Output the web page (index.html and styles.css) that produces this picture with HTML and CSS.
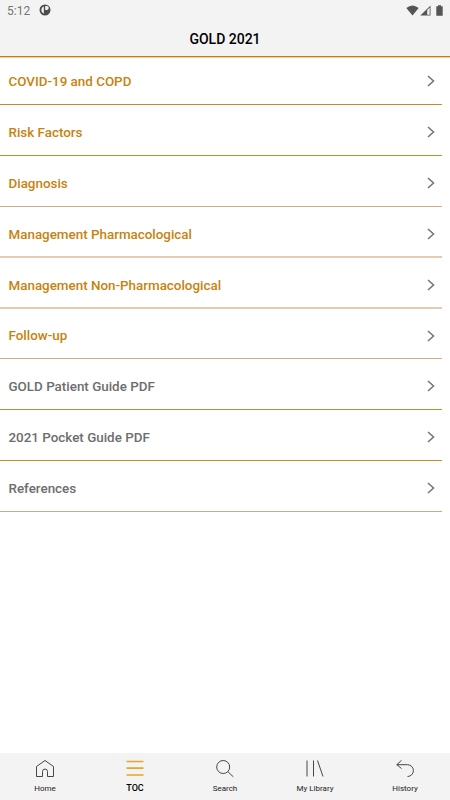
FILE: index.html
```html
<!DOCTYPE html>
<html lang="en">
<head>
  <meta charset="UTF-8" />
  <meta name="viewport" content="width=device-width, initial-scale=1.0" />
  <title>GOLD 2021</title>
  <link rel="stylesheet" href="styles.css">
</head>
<body>
  <!-- Header -->
  <header class="header">
    <div class="status-bar">
      <span class="clock">5:12</span>
      <svg class="status-app" width="12" height="12" viewBox="0 0 12 12">
        <circle cx="6" cy="6" r="5.5" fill="#4c4c4c" />
        <path d="M4.800 2.300A4 4 0 0 0 4.800 9.700z" fill="#f3f3f3" />
        <path d="M6.200 2H7.800a1.900 1.900 0 0 1 0 3.900H6.200z" fill="#f3f3f3" />
      </svg>
      <div class="status-icons">
        <svg width="13" height="11" viewBox="0 0 13 11">
          <path d="M0.300 3Q6.500-2.200 12.700 3L6.500 10.500z" fill="#555" />
        </svg>
        <svg width="11" height="11" viewBox="0 0 11 11">
          <path d="M0.300 10.500L10.500 0.500V10.500z" fill="#555" />
          <path d="M7.200 5V9.800H9.700V2.500z" fill="#eee" />
        </svg>
        <svg class="battery" width="7" height="11" viewBox="0 0 7 11">
          <path d="M0.300 1.300H2V0.300H5V1.300H6.700V10.700H0.300z" fill="#555" />
        </svg>
      </div>
    </div>
    <h1>GOLD 2021</h1>
  </header>

  <!-- Table of contents -->
  <main class="toc">
    <a class="toc-row"><span>COVID-19 and COPD</span><svg class="chevron" viewBox="0 0 8 12"><path d="M1 1l5.500 5L1 11" /></svg></a>
    <a class="toc-row"><span>Risk Factors</span><svg class="chevron" viewBox="0 0 8 12"><path d="M1 1l5.500 5L1 11" /></svg></a>
    <a class="toc-row soft"><span>Diagnosis</span><svg class="chevron" viewBox="0 0 8 12"><path d="M1 1l5.500 5L1 11" /></svg></a>
    <a class="toc-row pale"><span>Management Pharmacological</span><svg class="chevron" viewBox="0 0 8 12"><path d="M1 1l5.500 5L1 11" /></svg></a>
    <a class="toc-row pale"><span>Management Non-Pharmacological</span><svg class="chevron" viewBox="0 0 8 12"><path d="M1 1l5.500 5L1 11" /></svg></a>
    <a class="toc-row soft"><span>Follow-up</span><svg class="chevron" viewBox="0 0 8 12"><path d="M1 1l5.500 5L1 11" /></svg></a>
    <a class="toc-row extra"><span>GOLD Patient Guide PDF</span><svg class="chevron" viewBox="0 0 8 12"><path d="M1 1l5.500 5L1 11" /></svg></a>
    <a class="toc-row extra"><span>2021 Pocket Guide PDF</span><svg class="chevron" viewBox="0 0 8 12"><path d="M1 1l5.500 5L1 11" /></svg></a>
    <a class="toc-row extra soft"><span>References</span><svg class="chevron" viewBox="0 0 8 12"><path d="M1 1l5.500 5L1 11" /></svg></a>
  </main>

  <!-- Bottom tabs -->
  <nav class="tabs">
    <a class="tab">
      <svg viewBox="0 0 18 18"><path d="M0.500 6.500L9 0.500l8.500 6V16.500H11.500V11.500a2.500 2.500 0 0 0-5 0V16.500H0.500z" /></svg>
      <span>Home</span>
    </a>
    <a class="tab active">
      <svg viewBox="0 0 18 18"><path d="M0.500 1.500h17M0.500 8.200h17M0.500 15h17" /></svg>
      <span>TOC</span>
    </a>
    <a class="tab">
      <svg viewBox="0 0 18 18"><circle cx="7.200" cy="7" r="6.500" /><path d="M12 11.800l5.300 5" /></svg>
      <span>Search</span>
    </a>
    <a class="tab">
      <svg viewBox="0 0 18 18"><path d="M1 0.500v16M7.500 0.500v16M11.500 0.500l5.500 16" /></svg>
      <span>My Library</span>
    </a>
    <a class="tab">
      <svg viewBox="0 0 18 18"><path d="M5.500 0.300L0.800 4.700l4.700 3.800M0.800 4.700h10.700a5.800 5.800 0 0 1 0 11.800" /></svg>
      <span>History</span>
    </a>
  </nav>
</body>
</html>
```
FILE: styles.css
```css
* {
  box-sizing: border-box;
}
body {
  margin: 0;
  height: 100vh;
  display: flex;
  flex-direction: column;
  font-family: Roboto, sans-serif;
  background: #fff;
}
.header {
  height: 57px;
  flex-shrink: 0;
  background: #f3f3f3;
  border-bottom: 1px solid #cc7c0c;
  box-shadow: 0 1px 0 #f3cf9f;
}
.status-bar {
  display: flex;
  align-items: center;
  height: 20px;
  padding: 0 7px;
}
.clock {
  width: 32px;
  padding-top: 2px;
  font-size: 12px;
  color: #757575;
}
.status-icons {
  display: flex;
  gap: 1px;
  margin-left: auto;
}
.battery {
  margin-left: 4px;
}
.header h1 {
  margin: 0;
  font-size: 14px;
  font-weight: 500;
  line-height: 39px;
  text-align: center;
  color: #000;
}
/* Contents list */
.toc {
  flex: 1;
  margin-right: 8px;
}
.toc-row {
  display: flex;
  align-items: center;
  justify-content: space-between;
  height: 51px;
  padding: 4px 7px 0 8.5px;
  border-bottom: 1px solid #c98a26;
  font-size: 13.4px;
  font-weight: 500;
  color: #c8820f;
}
.toc-row:first-child {
  height: 48px;
  padding-top: 1px;
}
.toc-row.soft {
  border-bottom-color: #d5a982;
}
.toc-row.pale {
  padding-top: 5px;
  border-bottom: 2px solid #e6cbb3;
}
.toc-row.pale + .toc-row.soft {
  height: 50px;
}
.toc-row.extra {
  color: #6d6d6d;
}
.chevron {
  width: 8px;
  height: 12px;
  fill: none;
  stroke: #777;
  stroke-width: 1.6;
}
/* Bottom tabs */
.tabs {
  display: flex;
  height: 47px;
  flex-shrink: 0;
  background: #f3f3f3;
}
.tab {
  flex: 1;
  display: flex;
  flex-direction: column;
  align-items: center;
  padding-top: 7px;
  font-size: 8px;
  color: #222;
}
.tab svg {
  width: 18px;
  height: 18px;
  fill: none;
  stroke: #333;
  stroke-width: 0.9;
}
.tab span {
  margin-top: 5px;
  line-height: 12px;
}
.tab.active {
  font-size: 9px;
  font-weight: 500;
  color: #000;
}
.tab.active svg {
  stroke: #e9a42a;
  stroke-width: 1.7;
}
.tab.active span {
  margin-top: 4px;
}
```
